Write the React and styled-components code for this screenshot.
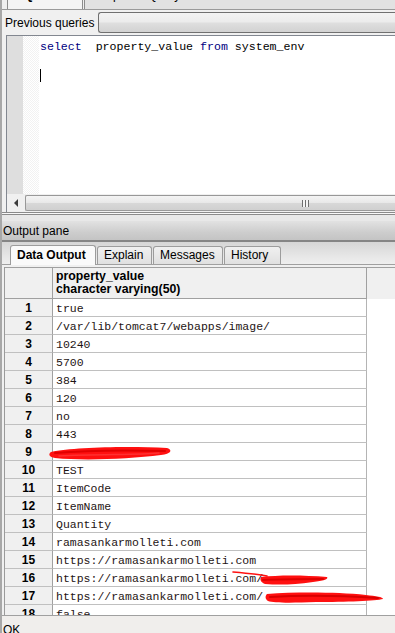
import React from 'react'
import styled, { createGlobalStyle } from 'styled-components'

const Global = createGlobalStyle`
  html, body { margin: 0; padding: 0; background: #f0f0f0; }
  body { font-family: "Liberation Sans", Arial, sans-serif; }
`

const Window = styled.div`
  width: 395px;
  height: 633px;
  overflow: hidden;
  display: flex;
  flex-direction: column;
  background: #f0f0f0;
  border-left: 2px solid #a8a8a8;
  box-sizing: border-box;
`

const TopTabs = styled.div`
  height: 9px;
  flex: none;
  overflow: hidden;
  display: flex;
  align-items: flex-end;
  padding-left: 5px;
  gap: 1px;
`

const TopTab = styled.div`
  height: 22px;
  flex: none;
  box-sizing: border-box;
  padding: 0 8px;
  font-size: 12px;
  line-height: 14px;
  font-weight: ${p => (p.$active ? 'bold' : 'normal')};
  background: ${p => (p.$active ? '#f4f4f4' : '#e2e2e2')};
  border: 1px solid #8c8c8c;
  border-bottom: none;
  color: #000;
  width: ${p => p.$w}px;
  white-space: nowrap;
  overflow: hidden;
`

const QueryBar = styled.div`
  height: 26px;
  flex: none;
  display: flex;
  align-items: center;
  gap: 4px;
  padding-left: 3px;
  border-top: 1px solid #9a9a9a;
  box-sizing: border-box;
`

const Label = styled.span`
  font-size: 12px;
  color: #000;
  white-space: nowrap;
`

const Combo = styled.div`
  flex: 1;
  height: 21px;
  box-sizing: border-box;
  border: 1px solid #707070;
  border-right: none;
  border-radius: 3px 0 0 3px;
  background: linear-gradient(#f3f3f3 0%, #ececec 45%, #dedede 55%, #d2d2d2 100%);
`

const EditorPane = styled.div`
  height: 158px;
  flex: none;
  margin-left: 4px;
  display: flex;
  border-top: 1px solid #828790;
  border-left: 1px solid #828790;
  background: #fff;
`

const Gutter = styled.div`
  width: 16px;
  flex: none;
  background: #dedede;
`

const FoldMargin = styled.div`
  width: 16px;
  flex: none;
  background: repeating-conic-gradient(#f2f2f2 0 25%, #ffffff 0 50%) 0 0 / 2px 2px;
`

const Code = styled.div`
  flex: 1;
  padding-top: 4px;
  padding-left: 1px;
  font-family: "Liberation Mono", "Courier New", monospace;
  font-size: 11.6px;
  line-height: 14px;
  color: #000;
`

const CodeLine = styled.div`
  height: 14px;
  white-space: pre;
`

const Keyword = styled.span`
  color: #00007f;
`

const Caret = styled.span`
  display: inline-block;
  width: 1px;
  height: 13px;
  margin-top: 1px;
  background: #000;
`

const HScroll = styled.div`
  height: 18px;
  flex: none;
  margin-left: 4px;
  display: flex;
  align-items: stretch;
  background: #f0f0f0;
  border-left: 1px solid #828790;
  box-sizing: border-box;
  padding: 1px 0;
`

const ArrowBtn = styled.div`
  width: 18px;
  flex: none;
  display: flex;
  align-items: center;
  justify-content: center;
  &::before {
    content: '';
    border-style: solid;
    border-width: 4px 4px 4px 0;
    border-color: transparent #3c3c3c transparent transparent;
  }
`

const Thumb = styled.div`
  flex: 1;
  border: 1px solid #989898;
  border-right: none;
  border-radius: 2px 0 0 2px;
  background: linear-gradient(#f4f4f4, #e8e8e8 50%, #d8d8d8 51%, #d0d0d0);
  display: flex;
  align-items: center;
  padding-left: 276px;
`

const Grip = styled.span`
  width: 7px;
  height: 7px;
  background: repeating-linear-gradient(90deg, #6e6e6e 0 1px, #f4f4f4 1px 3px);
`

const Splitter = styled.div`
  height: 8px;
  flex: none;
  border-top: 1px solid #8a8a8a;
  box-shadow: inset 0 1px 0 #f8f8f8, inset 0 2px 0 #8a8a8a;
  background: #e8e8e8;
`

const OutputBar = styled.div`
  height: 21px;
  flex: none;
  box-sizing: border-box;
  padding-left: 1px;
  display: flex;
  align-items: center;
  font-size: 12px;
  color: #000;
  background: linear-gradient(#e2e2e2, #cdcdcd 60%, #c4c4c4);
  border-bottom: 2px solid #858585;
`

const TabStrip = styled.div`
  height: 23px;
  flex: none;
  display: flex;
  align-items: flex-end;
  padding-left: 8px;
  gap: 1px;
  background: linear-gradient(#d6d6d6, #e8e8e8 70%, #efefef);
  border-bottom: 1px solid #a0a0a0;
  box-sizing: border-box;
`

const Tab = styled.div`
  width: ${p => p.$w}px;
  height: ${p => (p.$active ? 20 : 18)}px;
  box-sizing: border-box;
  padding-left: 6px;
  font-size: 12px;
  line-height: ${p => (p.$active ? 19 : 17)}px;
  font-weight: ${p => (p.$active ? 'bold' : 'normal')};
  color: #000;
  border: 1px solid #9c9c9c;
  border-bottom: none;
  border-radius: 3px 3px 0 0;
  background: ${p => (p.$active ? '#fafafa' : 'linear-gradient(#f0f0f0, #e0e0e0)')};
  margin-bottom: ${p => (p.$active ? -1 : 0)}px;
  white-space: nowrap;
`

const Grid = styled.div`
  flex: 1;
  margin-top: 2px;
  margin-left: 2px;
  overflow: hidden;
  border-left: 1px solid #9a9a9a;
  background: #fff;
  display: flex;
  flex-direction: column;
`

const HeadRow = styled.div`
  height: 32px;
  flex: none;
  display: flex;
  background: #f0f0f0;
  border-top: 1px solid #a0a0a0;
  box-sizing: border-box;
`

const Corner = styled.div`
  width: 48px;
  flex: none;
  border-right: 1px solid #a0a0a0;
  border-bottom: 1px solid #a0a0a0;
  box-sizing: border-box;
`

const ColHead = styled.div`
  width: 314px;
  flex: none;
  box-sizing: border-box;
  padding: 2px 0 0 3px;
  font-size: 12.3px;
  line-height: 13px;
  font-weight: bold;
  color: #000;
  border-right: 1px solid #a0a0a0;
  border-bottom: 1px solid #a0a0a0;
`

const Row = styled.div`
  height: 18px;
  flex: none;
  display: flex;
  position: relative;
`

const NumCell = styled.div`
  width: 48px;
  flex: none;
  box-sizing: border-box;
  text-align: center;
  font-size: 12px;
  line-height: 18px;
  font-weight: bold;
  color: #000;
  background: #f0f0f0;
  border-right: 1px solid #a0a0a0;
  border-bottom: 1px solid #c0c0c0;
`

const DataCell = styled.div`
  width: 314px;
  flex: none;
  box-sizing: border-box;
  padding: 1px 0 0 3px;
  font-family: "Liberation Mono", "Courier New", monospace;
  font-size: 11.5px;
  line-height: 17px;
  color: #1e1414;
  white-space: pre;
  overflow: hidden;
  border-right: 1px solid #b4b4b4;
  border-bottom: 1px solid #c0c0c0;
`

const Scribble = styled.svg`
  position: absolute;
  left: ${p => p.$x}px;
  top: ${p => p.$y}px;
  overflow: visible;
  pointer-events: none;
`

const StatusBar = styled.div`
  height: 18px;
  flex: none;
  box-sizing: border-box;
  border-top: 1px solid #a0a0a0;
  background: #f0eeec;
  padding: 7px 0 0 3px;
  font-size: 12px;
  color: #000;
  margin-left: -2px;
`

const rows = [
  'true',
  '/var/lib/tomcat7/webapps/image/',
  '10240',
  '5700',
  '384',
  '120',
  'no',
  '443',
  '',
  'TEST',
  'ItemCode',
  'ItemName',
  'Quantity',
  'ramasankarmolleti.com',
  'https://ramasankarmolleti.com',
  'https://ramasankarmolleti.com/',
  'https://ramasankarmolleti.com/',
  'false',
]

const marks = {
  9: (
    <Scribble $x={44} $y={2} width="124" height="16">
      <path d="M2,7 C25,2 80,1 118,3 C124,5 122,9 112,10 C80,14 35,16 6,13 C0,12 -1,9 2,7 Z" fill="#ff1010" />
      <path d="M6,8 C40,5 80,5 116,6" stroke="#e00000" strokeWidth="2" fill="none" strokeLinecap="round" />
      <path d="M10,11 C50,9 90,10 110,8" stroke="#ff3030" strokeWidth="1.5" fill="none" strokeLinecap="round" />
    </Scribble>
  ),
  16: (
    <Scribble $x={228} $y={3} width="96" height="14">
      <path d="M0,0 C12,1 24,2 34,4" stroke="#ff1010" strokeWidth="1.6" fill="none" strokeLinecap="round" />
      <path d="M28,5 C45,3 70,3 94,5 C96,7 90,9 80,10 C60,13 45,13 32,12 C27,10 27,7 28,5 Z" fill="#ff1010" />
      <path d="M30,8 C50,7 70,7 90,7" stroke="#e00000" strokeWidth="2" fill="none" strokeLinecap="round" />
    </Scribble>
  ),
  17: (
    <Scribble $x={261} $y={4} width="118" height="13">
      <path d="M1,3 C30,1 70,1 100,4 C110,5 117,6 117,8 C110,10 80,11 50,11 C25,12 8,12 2,10 C-1,8 -1,5 1,3 Z" fill="#ff1010" />
      <path d="M4,6 C40,4 80,5 112,7" stroke="#d80000" strokeWidth="2" fill="none" strokeLinecap="round" />
    </Scribble>
  ),
}

export default function App() {
  return (
    <>
      <Global />
      <Window>
        <TopTabs>
          <TopTab $active $w={76}>SQL Editor</TopTab>
          <TopTab $w={320}>Graphical Query Builder</TopTab>
        </TopTabs>
        <QueryBar>
          <Label>Previous queries</Label>
          <Combo />
        </QueryBar>
        <EditorPane>
          <Gutter />
          <FoldMargin />
          <Code>
            <CodeLine>
              <Keyword>select</Keyword>  property_value <Keyword>from</Keyword> system_env
            </CodeLine>
            <CodeLine />
            <CodeLine>
              <Caret />
            </CodeLine>
          </Code>
        </EditorPane>
        <HScroll>
          <ArrowBtn />
          <Thumb>
            <Grip />
          </Thumb>
        </HScroll>
        <Splitter />
        <OutputBar>Output pane</OutputBar>
        <TabStrip>
          <Tab $active $w={86}>Data Output</Tab>
          <Tab $w={55}>Explain</Tab>
          <Tab $w={70}>Messages</Tab>
          <Tab $w={57}>History</Tab>
        </TabStrip>
        <Grid>
          <HeadRow>
            <Corner />
            <ColHead>
              property_value
              <br />
              character varying(50)
            </ColHead>
          </HeadRow>
          {rows.map((v, i) => (
            <Row key={i}>
              <NumCell>{i + 1}</NumCell>
              <DataCell>{v}</DataCell>
              {marks[i + 1]}
            </Row>
          ))}
        </Grid>
        <StatusBar>OK</StatusBar>
      </Window>
    </>
  )
}
